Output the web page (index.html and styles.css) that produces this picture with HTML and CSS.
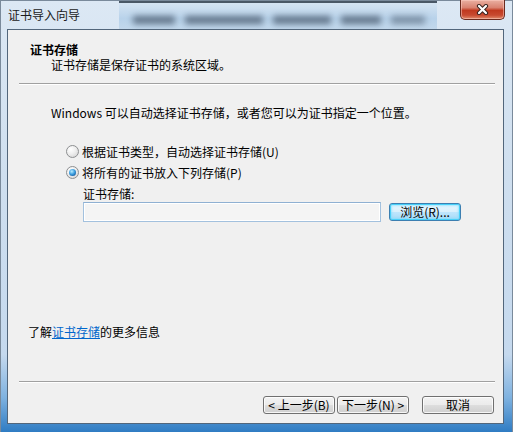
FILE: index.html
```html
<!DOCTYPE html>
<html lang="zh-CN">
<head>
    <meta charset="UTF-8">
    <meta name="viewport" content="width=device-width, initial-scale=1.0">
    <title>证书导入向导</title>
    <link rel="stylesheet" href="styles.css">
</head>
<body>
    <div class="window">
        <div class="titlebar">
            <span class="title">证书导入向导</span>
            <div class="behind">
                <span class="smudge s1"></span>
                <span class="smudge s2"></span>
                <span class="smudge s3"></span>
                <span class="smudge s4"></span>
                <span class="smudge s5"></span>
            </div>
            <button class="close" aria-label="关闭">
                <svg width="15" height="11" viewBox="0 0 15 11">
                    <path d="M4 2 L11 9 M11 2 L4 9" stroke="#3b2420" stroke-width="4.2" stroke-linecap="round" fill="none"/>
                    <path d="M4 2 L11 9 M11 2 L4 9" stroke="#ffffff" stroke-width="2.2" stroke-linecap="round" fill="none"/>
                </svg>
            </button>
        </div>

        <div class="client">
            <div class="header">
                <div class="heading">证书存储</div>
                <div class="subheading">证书存储是保存证书的系统区域。</div>
            </div>
            <div class="rule"></div>

            <div class="main">
                <p class="intro">Windows 可以自动选择证书存储，或者您可以为证书指定一个位置。</p>
                <div class="options">
                    <label class="option"><span class="radio"></span>根据证书类型，自动选择证书存储(U)</label>
                    <label class="option"><span class="radio checked"></span>将所有的证书放入下列存储(P)</label>
                </div>
                <div class="store">
                    <div class="store-label">证书存储:</div>
                    <div class="store-row">
                        <div class="textbox"></div>
                        <button class="btn default">浏览(R)...</button>
                    </div>
                </div>
            </div>

            <p class="info">了解<a href="#">证书存储</a>的更多信息</p>
            <div class="rule"></div>

            <div class="buttons">
                <button class="btn">&lt; 上一步(B)</button>
                <button class="btn next">下一步(N) &gt;</button>
                <button class="btn cancel">取消</button>
            </div>
        </div>
    </div>
</body>
</html>
```

FILE: styles.css
```css
*{
    margin: 0;
    padding: 0;
    box-sizing: border-box;
}
body{
    width: 513px;
    height: 432px;
    overflow: hidden;
    font-family: "Noto Sans CJK SC", "Liberation Sans", sans-serif;
    font-size: 12px;
    color: #000;
}
.window{
    width: 513px;
    height: 432px;
    display: flex;
    flex-direction: column;
    border: 1px solid #7a8a9b;
    border-bottom: none;
    background: linear-gradient(to bottom, #dce8f4 0%, #cfdfef 40%, #c5d9ee 82%, #7fb2e0 92%, #2f7cc3 100%);
    position: relative;
}
.titlebar{
    height: 28px;
    padding: 5px 0 0 7px;
    position: relative;
}
.title{
    position: relative;
    z-index: 2;
    line-height: 16px;
    font-size: 12px;
    color: #1a1a1a;
}
.behind{
    position: absolute;
    left: 118px;
    top: 0;
    width: 318px;
    height: 28px;
    border-top: 2px solid #4a5866;
    background: linear-gradient(to bottom, #d5e4f2, #b8d2ea 60%, #c2d8ec);
    display: flex;
    align-items: center;
    gap: 10px;
    padding: 8px 0 0 14px;
    overflow: hidden;
}
.smudge{
    height: 8px;
    background-color: #3d4d60;
    filter: blur(3px);
    opacity: 0.7;
}
.s1{ width: 42px; }
.s2{ width: 78px; }
.s3{ width: 58px; }
.s4{ width: 40px; }
.s5{ width: 34px; opacity: 0.5; }
.close{
    position: absolute;
    top: -1px;
    right: 7px;
    width: 45px;
    height: 20px;
    border: 1px solid #6a2a1e;
    border-top: none;
    border-radius: 0 0 5px 5px;
    background: linear-gradient(to bottom, #eab0a2 0%, #d98270 40%, #c0391f 55%, #c84a30 80%, #e08b6c 100%);
    box-shadow: inset 0 0 0 1px rgba(255, 210, 200, 0.5);
    display: flex;
    align-items: center;
    justify-content: center;
}
.client{
    flex: 1;
    margin: 0 8px 8px 6px;
    border: 1px solid #52667b;
    background-color: #f0f0f0;
    display: flex;
    flex-direction: column;
}
.header{
    padding: 12px 0 11px 22px;
}
.heading{
    font-weight: bold;
    line-height: 15px;
}
.subheading{
    padding-left: 21px;
    line-height: 15px;
}
.rule{
    margin: 0 8px 0 11px;
    border-top: 1px solid #a0a0a0;
    border-bottom: 1px solid #ffffff;
}
.main{
    padding: 20px 0 0 43px;
}
.intro{
    line-height: 16px;
}
.options{
    margin: 20px 0 0 15px;
}
.option{
    display: flex;
    align-items: center;
    gap: 3px;
    height: 21px;
}
.radio{
    width: 13px;
    height: 13px;
    border-radius: 50%;
    border: 1px solid #8d8f91;
    background: radial-gradient(circle at 35% 30%, #ffffff 0%, #eeeeee 45%, #cfcfcf 100%);
    display: inline-flex;
    align-items: center;
    justify-content: center;
}
.radio.checked::after{
    content: "";
    width: 7px;
    height: 7px;
    border-radius: 50%;
    background: radial-gradient(circle at 40% 35%, #b9ecff 0%, #3ea0e0 45%, #165ea3 80%, #0d3f73 100%);
}
.store{
    margin-left: 32px;
}
.store-label{
    margin-top: 4px;
    line-height: 14px;
}
.store-row{
    margin-top: 1px;
    display: flex;
    align-items: center;
}
.textbox{
    width: 298px;
    height: 20px;
    border: 1px solid #a3c1de;
    border-top-color: #8fb0d2;
    background-color: #f4f4f4;
    box-shadow: inset 0 0 0 1px #ffffff;
}
.btn{
    width: 72px;
    height: 18px;
    font-family: "Noto Sans CJK SC", "Liberation Sans", sans-serif;
    font-size: 12px;
    line-height: 14px;
    color: #000;
    border: 1px solid #707070;
    border-radius: 3px;
    background: linear-gradient(to bottom, #f3f3f3 0%, #ebebeb 48%, #dddddd 52%, #cfcfcf 100%);
    box-shadow: inset 0 0 0 1px rgba(255, 255, 255, 0.8);
}
.btn.default{
    margin-left: 8px;
    border-color: #3c7fb1;
    background: linear-gradient(to bottom, #e9f6fd 0%, #d9f0fc 48%, #bee6fd 52%, #a7d9f5 100%);
    box-shadow: inset 0 0 0 1px #48d0f8, inset 0 0 2px 2px rgba(120, 220, 255, 0.6);
}
.info{
    margin: auto 0 41px;
    padding-left: 20px;
    line-height: 16px;
}
.info a{
    color: #0066cc;
    text-decoration: underline;
}
.buttons{
    display: flex;
    justify-content: flex-end;
    padding: 13px 9px 9px 0;
}
.next{
    margin-left: 2px;
}
.cancel{
    margin-left: 13px;
}
```
